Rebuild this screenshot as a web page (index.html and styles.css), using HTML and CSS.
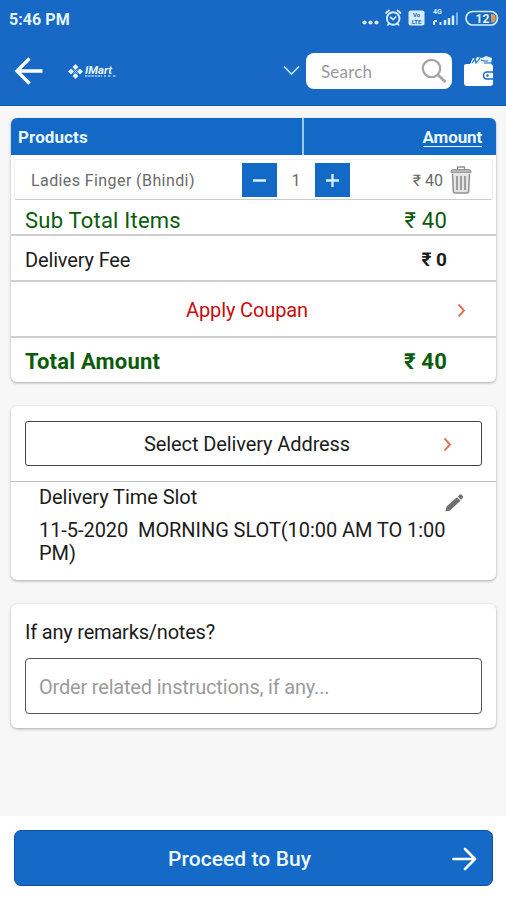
FILE: index.html
```html
<!DOCTYPE html>
<html lang="en">
<head>
<meta charset="utf-8">
<title>IMart Cart</title>
<link rel="stylesheet" href="styles.css">
</head>
<body>
<div class="screen">
  <header class="top">
    <div class="status">
      <span class="clock">5:46 PM</span>
      <svg class="status-icons" width="138" height="24" viewBox="0 0 138 24" fill="none" stroke="#d3edff">
        <g fill="#d3edff" stroke="none"><circle cx="3.500" cy="15.500" r="2.100"/><circle cx="9.500" cy="15.500" r="2.100"/><circle cx="15.500" cy="15.500" r="2.100"/></g>
        <circle cx="32.200" cy="11.500" r="6.300" stroke-width="1.900"/>
        <path d="M29 10l3.200 2.500 3-3M24.500 6.500l4-3.500M40 6.500L36 3M28 16.500l-1.500 2M36.500 16.500l1.500 2" stroke-width="1.700"/>
        <rect x="47.500" y="3.500" width="16" height="15" rx="2" fill="#d3edff" stroke="none"/>
        <text class="volte" x="55.500" y="9.800">Vo</text><text class="volte" x="55.500" y="16.800">LTE</text>
        <text class="net" x="72" y="7">4G</text>
        <path d="M73 18v-4M73 14h3M79.500 18v-3" stroke-width="2"/>
        <path d="M84 18v-5M88 18v-7M92 18V8.500" stroke-width="2.500"/>
        <path d="M96 18V5.500" stroke="#76b3ea" stroke-width="2"/>
        <rect x="105" y="4.500" width="31.500" height="13.500" rx="6.700" stroke-width="1.700"/>
        <path d="M130 7h1a3.500 4 0 0 1 0 8.500h-1z" fill="#d99a55" stroke="none"/>
        <text class="batt" x="121.500" y="15.600">12</text>
      </svg>
    </div>
    <div class="appbar">
      <svg class="back" width="29" height="28" viewBox="0 0 29 28" fill="none" stroke="#fff" stroke-width="3.300"><path d="M28.500 14H3M15.500 1.500L3 14l12.500 12.500"/></svg>
      <div class="brand">
        <svg width="15" height="15" viewBox="0 0 15 15" fill="#e4f6ff"><path d="M7.500 0l3 3-3 3-3-3zM3 4.500l3 3-3 3-3-3zM12 4.500l3 3-3 3-3-3zM7.500 9l3 3-3 3-3-3z"/><path d="M5.500 5.500l4 4M9.500 5.500l-4 4" stroke="#b3d9f6" stroke-width=".8"/></svg>
        <div class="wordmark"><span>IMart</span><svg width="32" height="2" viewBox="0 0 32 2"><path d="M0 1h17M19 1h2M23 1h3M28 1h3" stroke="#a6d3f6" stroke-width="1.400" stroke-dasharray="2.500 .7"/></svg></div>
      </div>
      <svg class="caret" width="17" height="12" viewBox="0 0 17 12" fill="none" stroke="#b9e2ff" stroke-width="1.700"><path d="M1 1.500L8.500 9 16 1.500"/></svg>
      <div class="search"><span>Search</span>
        <svg width="26" height="26" viewBox="0 0 26 26" fill="none" stroke="#a5a5a5"><circle cx="10.500" cy="10.500" r="8.700" stroke-width="2.200"/><path d="M16.500 16.500l8 7.500" stroke-width="3"/></svg>
      </div>
      <svg class="wallet" width="30" height="32" viewBox="0 0 30 32"><path d="M0 11q0-2 3-2h23q3 0 3 3v16q0 3-3 3H3q-3 0-3-3z" fill="#fff"/><path d="M6 9l3-6 3 1 1-2 5 1 4-2 6 2-1 6z" fill="#e8f7ff"/><path d="M8 8l3-4 1 4 4-5M17 5l3 1h4M20 8h7" fill="none" stroke="#1769c5" stroke-width="1.200"/><path d="M29 17h-6a3.500 3.500 0 0 0 0 7h6" fill="#fff" stroke="#1769c5" stroke-width="1.500"/><circle cx="23.500" cy="20.500" r="1.200" fill="#1769c5"/></svg>
    </div>
  </header>

  <main class="content">
    <section class="card bill">
      <div class="bill-head"><div class="col-products"><span class="t-products">Products</span></div><div class="col-amount"><span class="t-amount">Amount</span></div></div>
      <div class="item">
        <span class="item-name">Ladies Finger (Bhindi)</span>
        <div class="stepper">
          <button class="step"><svg width="15" height="15" viewBox="0 0 15 15"><path d="M1 7.500h13" stroke="#d9f1ff" stroke-width="2.300"/></svg></button>
          <span class="qty">1</span>
          <button class="step"><svg width="15" height="15" viewBox="0 0 15 15"><path d="M1 7.500h13M7.500 1v13" stroke="#d9f1ff" stroke-width="2.300"/></svg></button>
        </div>
        <span class="item-price">₹ 40</span>
        <svg class="trash" width="22" height="28" viewBox="0 0 22 28" fill="none" stroke="#929292"><path d="M1 5.500q0-2 2-2h16q2 0 2 2v1.200H1z" fill="#b5b5b5" stroke-width="1"/><path d="M7.500 3V1h7v2" stroke-width="1.400"/><path d="M2.500 8l.8 17q.1 2 2 2h11.400q1.900 0 2-2l.8-17" fill="#e4e4e4" stroke-width="1.500"/><path d="M7 10v14M11 10v14M15 10v14" stroke-width="1.700"/></svg>
      </div>
      <div class="row subtotal"><span>Sub Total Items</span><span class="v">₹ 40</span></div>
      <div class="row fee"><span class="label">Delivery Fee</span><span class="v">₹ 0</span></div>
      <div class="row coupon"><span>Apply Coupan</span><svg class="chev" width="9" height="15" viewBox="0 0 9 15"><path d="M1.500 1.500l5.500 6-5.500 6" fill="none" stroke="#d97852" stroke-width="1.900"/></svg></div>
      <div class="row total"><span>Total Amount</span><span class="v">₹ 40</span></div>
    </section>

    <section class="card delivery">
      <div class="address"><span>Select Delivery Address</span><svg class="chev" width="9" height="15" viewBox="0 0 9 15"><path d="M1.500 1.500l5.500 6-5.500 6" fill="none" stroke="#df7259" stroke-width="1.900"/></svg></div>
      <div class="slot">
        <div class="slot-head"><span>Delivery Time Slot</span><svg width="20" height="20" viewBox="0 0 20 20" fill="#707070"><path d="M1.500 18.500l1-5L13 4.200l3.500 3.600L6 17.500zM13.800 3.500l2-1.900q1-.8 1.900.1l1.100 1.200q.8.900-.1 1.800l-1.700 2.200z"/></svg></div>
        <div class="slot-text"><span class="l1">11-5-2020&nbsp; MORNING SLOT(10:00 AM TO 1:00</span><br><span>PM)</span></div>
      </div>
    </section>

    <section class="card notes">
      <div class="notes-title">If any remarks/notes?</div>
      <div class="notes-box"><span>Order related instructions, if any...</span></div>
    </section>
  </main>

  <footer class="foot">
    <div class="proceed"><span>Proceed to Buy</span><svg width="25" height="24" viewBox="0 0 25 24" fill="none" stroke="#fff" stroke-width="2.700" stroke-linecap="round" stroke-linejoin="round"><path d="M1.500 12H23M13 2l10 10-10 10"/></svg></div>
  </footer>
</div>
</body>
</html>
```
FILE: styles.css
```css
* { box-sizing: border-box; }
body { margin: 0; background: #f7f7f7; font-family: Roboto, sans-serif; color: #1c1c1c; }
svg { display: block; flex: none; }
span { white-space: nowrap; }
.screen { width: 506px; height: 900px; display: flex; flex-direction: column; overflow: hidden; }
.top { height: 106px; background: #1769c5; border-bottom: 1px solid #0c57ae; flex: none; }
.status { height: 37px; padding: 1px 7px 0 9px; display: flex; justify-content: space-between; align-items: center; }
.clock { color: #e4f5ff; font-size: 16px; font-weight: 700; letter-spacing: .05px; }
.volte { font: 700 6px Roboto, sans-serif; fill: #1769c5; stroke: none; text-anchor: middle; }
.net { font: 700 7px Roboto, sans-serif; fill: #d3edff; stroke: none; }
.batt { font: 700 12px Roboto, sans-serif; fill: #e4f5ff; stroke: none; text-anchor: middle; }
.appbar { height: 68px; padding: 0 11px 0 14px; display: flex; align-items: center; }
.brand { display: flex; align-items: center; gap: 2px; margin-left: 25px; width: 215px; }
.wordmark { color: #e4f6ff; font-size: 11.5px; font-style: italic; font-weight: 700; line-height: 10px; }
.wordmark span { display: block; }
.caret { margin-right: 6px; }
.search { width: 146px; height: 36px; border-radius: 8px; background: #fff; color: #999; display: flex; align-items: center; justify-content: space-between; padding: 0 5px 0 15px; font-family: Lato, sans-serif; font-size: 17px; letter-spacing: .2px; }
.wallet { margin-left: 12px; }
.content { flex: 1; padding: 12px 10px 0 11px; }
.card { background: #fff; border-radius: 6px; box-shadow: 0 1px 3px rgba(0,0,0,.32); overflow: hidden; margin-bottom: 24px; }
.bill { height: 264px; }
.bill-head { height: 37px; display: flex; background: #136ac6; color: #e9f7ff; font-weight: 700; font-size: 17px; }
.col-products { width: 293px; border-right: 2px solid #9ccbe8; padding: 1px 0 0 7px; display: flex; align-items: center; letter-spacing: .1px; }
.col-amount { flex: 1; display: flex; align-items: center; justify-content: flex-end; padding: 2px 14px 0 0; letter-spacing: -.15px; }
.t-amount { border-bottom: 1px solid #e9f7ff; line-height: 17px; }
.item { height: 41px; margin: 4px 3px 0; border: 1px solid #eee; border-bottom-color: #ccc; border-radius: 3px; padding: 1px 20px 0 16px; display: flex; align-items: center; font-size: 16px; color: #6a6a6a; }
.item-name { width: 211px; letter-spacing: .41px; }
.stepper { display: flex; align-items: center; width: 108px; }
.step { width: 35px; height: 34px; border: 0; padding: 0; background: #136ac6; display: flex; align-items: center; justify-content: center; }
.qty { width: 38px; text-align: center; }
.item-price { margin-left: auto; margin-right: 7px; }
.row { padding: 0 49px 0 14px; display: flex; align-items: center; justify-content: space-between; border-bottom: 2px solid #cecece; }
.subtotal { height: 36px; padding-top: 7px; font-size: 22px; letter-spacing: .22px; color: #0b5b0b; }
.fee { height: 46px; padding-top: 3px; font-size: 20px; }
.fee .label { letter-spacing: -.15px; }
.fee .v { font-weight: 700; font-size: 19px; }
.coupon { height: 56px; padding: 2px 30px 0 175px; font-size: 20px; letter-spacing: -.12px; color: #c70d0d; }
.total { height: 44px; border: 0; font-size: 22px; letter-spacing: .2px; font-weight: 700; color: #0b5b0b; padding-top: 2px; }
.delivery { height: 174px; }
.address { margin: 15px 14px; height: 45px; border: 1px solid #444; border-radius: 3px; padding: 1px 29px 0 118px; display: flex; align-items: center; justify-content: space-between; font-size: 20px; letter-spacing: -.1px; }
.slot { border-top: 1px solid #bdbdbd; padding: 3px 32px 0 28px; font-size: 20px; letter-spacing: -.06px; }
.slot-head { display: flex; justify-content: space-between; height: 34px; line-height: 25px; }
.slot-head svg { margin-top: 8px; }
.slot-text { line-height: 23px; }
.notes { height: 124px; padding: 15px 14px; }
.notes-title { font-size: 20px; line-height: 26px; letter-spacing: -.2px; }
.notes-box { margin-top: 13px; height: 56px; border: 1px solid #555; border-radius: 4px; padding: 2px 0 0 13px; display: flex; align-items: center; font-size: 20px; letter-spacing: -.19px; color: #9b9b9b; }
.foot { height: 84px; background: #fff; padding: 14px 13px 0 14px; flex: none; }
.proceed { height: 56px; border-radius: 7px; background: #146ac6; border: 1px solid #0b51a8; color: #edf9ff; display: flex; align-items: center; justify-content: space-between; padding: 2px 15px 0 153px; font-size: 21px; font-weight: 500; letter-spacing: .07px; }
```
